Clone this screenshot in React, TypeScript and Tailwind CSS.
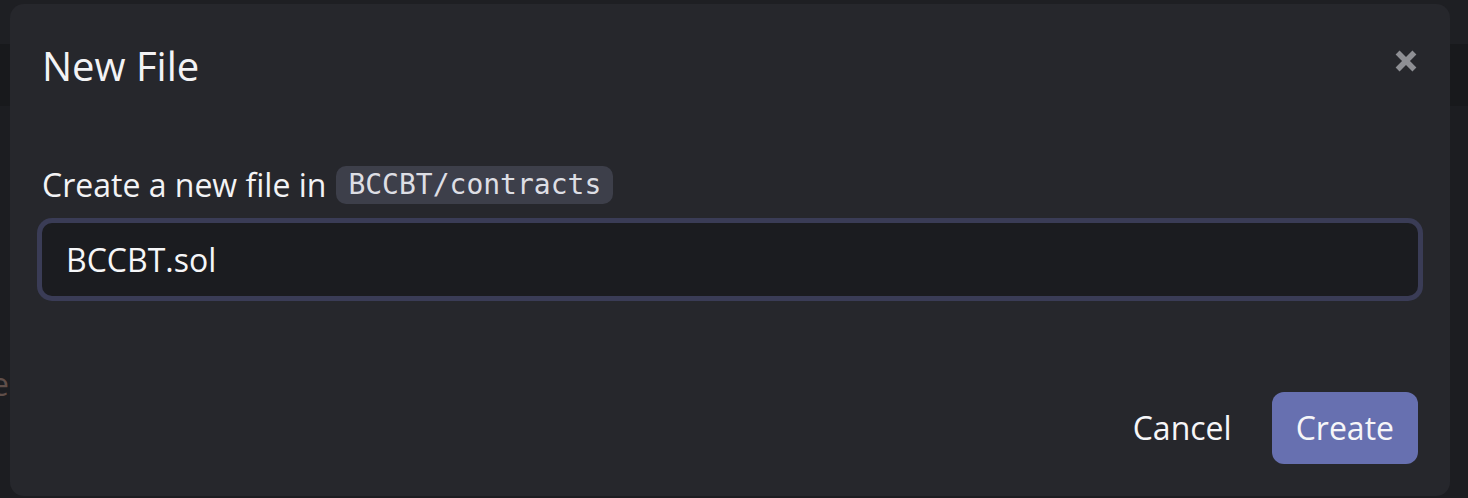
import React from "react";

export default function App() {
  return (
    <div
      className="relative w-[1468px] h-[498px] overflow-hidden bg-[#1c1d21]"
      style={{ fontFamily: '"Open Sans", "Noto Sans", sans-serif' }}
    >
      {/* background page */}
      <div className="flex flex-col">
        <div className="h-[44px] bg-[#1e1f23]" />
        <div className="h-[62px] bg-[#18191c]" />
        <div className="h-[392px] bg-[#1c1d21]" />
      </div>
      <span className="absolute left-[-9px] top-[360px] text-[32px] leading-[48px] text-[#5f4e49]">
        e
      </span>

      {/* dialog */}
      <div className="absolute left-[10px] top-[4px] w-[1440px] h-[492px] rounded-[14px] bg-[#26272c] px-8 pt-8 pb-8 flex flex-col">
        <div className="flex items-start justify-between">
          <h2 className="text-[40px] leading-[60px] text-[#f3f3f5] font-normal">New File</h2>
          <button className="mt-[14px] mr-[1px] w-[22px] h-[22px] flex items-center justify-center">
            <svg width="22" height="22" viewBox="0 0 22 22">
              <line x1="2.6" y1="2.6" x2="19.4" y2="19.4" stroke="#8e8f94" strokeWidth="5.6" />
              <line x1="19.4" y1="2.6" x2="2.6" y2="19.4" stroke="#8e8f94" strokeWidth="5.6" />
            </svg>
          </button>
        </div>

        <div className="mt-[65px] flex items-center gap-[10px] text-[32px] leading-[48px] text-[#f3f3f5]">
          <span>Create a new file in</span>
          <span
            className="h-[38px] px-3 rounded-[10px] bg-[#3d3f4a] text-[28px] leading-[38px] text-[#dddee4]"
            style={{ fontFamily: '"DejaVu Sans Mono", "Liberation Mono", monospace' }}
          >
            BCCBT/contracts
          </span>
        </div>

        <div className="mt-[14px] h-[73px] rounded-[10px] bg-[#1b1c20] ring-[5px] ring-[#3a3c56] flex items-center px-[24px]">
          <span className="text-[32px] leading-[48px] text-[#f6f6f8]">BCCBT.sol</span>
        </div>

        <div className="mt-auto flex justify-end items-center gap-[16px]">
          <button className="h-[72px] px-6 rounded-[12px] text-[32px] leading-[48px] text-[#f6f6f8]">
            Cancel
          </button>
          <button className="h-[72px] px-6 rounded-[12px] bg-[#6770b0] text-[32px] leading-[48px] text-[#f6f6f8]">
            Create
          </button>
        </div>
      </div>
    </div>
  );
}
